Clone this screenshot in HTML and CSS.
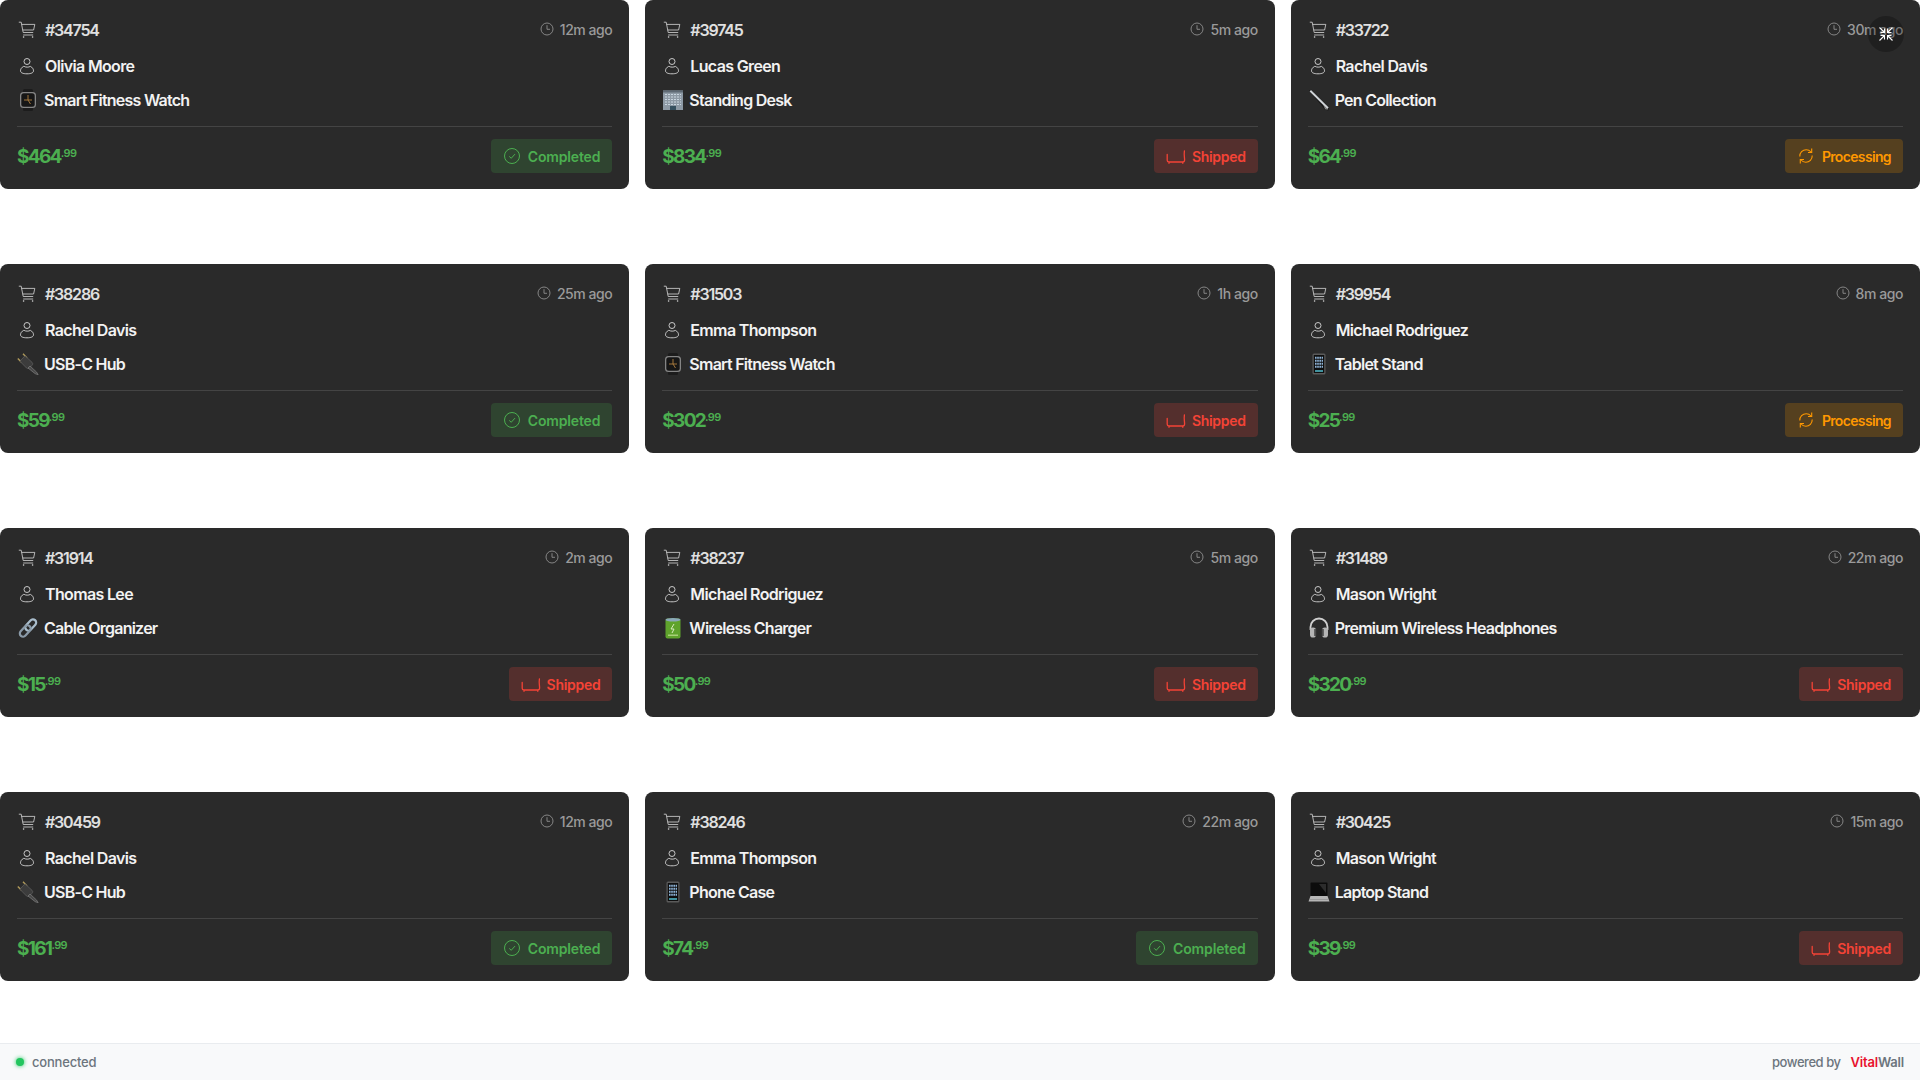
FILE: index.html
```html
<!DOCTYPE html>
<html lang="en">
<head>
<meta charset="utf-8">
<title>Orders</title>
<link rel="stylesheet" href="styles.css">
</head>
<body>
<svg class="defs" width="0" height="0" aria-hidden="true">
  <symbol id="i-cart" viewBox="0 0 18 18"><path d="M.8 1.200h2.400l2 10.300h10M3.600 3.400h13.200l-1.200 5.600H4.700M5.200 14h10" fill="none" stroke="currentColor" stroke-width=".8"/><circle cx="5.600" cy="16" r=".8" fill="currentColor"/><circle cx="14.600" cy="16" r=".8" fill="currentColor"/></symbol>
  <symbol id="i-user" viewBox="0 0 18 18"><circle cx="9" cy="4.500" r="3" fill="none" stroke="currentColor" stroke-width=".9"/><path d="M5.600 9.400C3.600 10.400 2.500 12 2.500 13.800c0 2 2.500 3 6.500 3s6.500-1 6.500-3c0-1.800-1.100-3.400-3.100-4.400-1.800 1-4.600 1-6.300 0z" fill="none" stroke="currentColor" stroke-width=".9"/></symbol>
  <symbol id="i-clock" viewBox="0 0 14 14"><circle cx="7" cy="7" r="6" fill="none" stroke="currentColor" stroke-width=".9"/><path d="M7 3.200V7.300h3" fill="none" stroke="currentColor" stroke-width=".9"/></symbol>
  <symbol id="i-check" viewBox="0 0 18 18"><circle cx="9" cy="9" r="7.500" fill="none" stroke="currentColor" stroke-width="1"/><path d="M6.200 9.300l2 2 3.800-4.200" fill="none" stroke="currentColor" stroke-width="1"/></symbol>
  <symbol id="i-ship" viewBox="0 0 20 18"><path d="M1.200 7.500v5.800c0 1.100.7 1.700 1.700 1.700h13.800c1.200 0 1.900-.7 1.900-1.900 0-3-.8-5-.2-9.100M3 15v1.300M16.800 15v1.300" fill="none" stroke="currentColor" stroke-width="1.300" stroke-linecap="round"/></symbol>
  <symbol id="i-sync" viewBox="0 0 18 18"><path d="M2.800 9.500C2.600 5.600 5.600 2.800 9.200 2.800c2 0 3.600.8 4.800 2.200M15.200 8.500c.2 3.900-2.800 6.700-6.400 6.700-2 0-3.600-.8-4.800-2.200" fill="none" stroke="currentColor" stroke-width="1.100"/><path d="M14.700 1.500V5.500H11M3.300 16.500V12.500H7" fill="none" stroke="currentColor" stroke-width="1.100"/></symbol>
  <symbol id="e-watch" viewBox="0 0 22 22"><rect x="6" y="0" width="10" height="22" rx="1.500" fill="#1c1c1c"/><rect x="3" y="3" width="16" height="16" rx="3.500" fill="#858585"/><rect x="4.300" y="4.300" width="13.400" height="13.400" rx="2.500" fill="#161616"/><path d="M11 6v5l2.500 4M7 11h8" stroke="#b08040" stroke-width=".9" fill="none"/></symbol>
  <symbol id="e-office" viewBox="0 0 22 22"><rect x="1" y="1.500" width="20" height="19.500" fill="#8e9aa5"/><rect x="1" y="1.500" width="20" height="2" fill="#5f6a75"/><path d="M3 5.500h16M3 8h16M3 10.500h16M3 13h16M3 15.500h16" stroke="#c9d6e0" stroke-width="1.200" stroke-dasharray="2 1"/><rect x="8" y="17" width="6" height="4" fill="#36505f"/></symbol>
  <symbol id="e-pen" viewBox="0 0 22 22"><path d="M1 1.500l2.200-.8 18 18-1 2.800-3-.7z" fill="#151515"/><path d="M2.300 1.800L20 19.200" stroke="#d0d4d8" stroke-width="2"/><path d="M15 15.500l5.200 5.200-3-.4z" fill="#8a8a8a"/></symbol>
  <symbol id="e-plug" viewBox="0 0 22 22"><path d="M6 .8l4 4.200M.8 5.500l4 4" stroke="#b09a5a" stroke-width="1.400"/><path d="M8 2.800l7 6.500c1 1 1 2 0 3l-2.500 2.500c-1 1-2 1-3 .2L2.800 8.200z" fill="#3c3c3c" stroke="#6a6a6a" stroke-width=".6"/><path d="M13 13l6.500 6 1.700 2.700-3-1L11 15z" fill="#4a4a4a" stroke="#8a8a8a" stroke-width=".6"/></symbol>
  <symbol id="e-link" viewBox="0 0 22 22"><g fill="none" stroke-width="2.200"><rect x="10.500" y="1.500" width="6.500" height="13" rx="3.250" transform="rotate(42 13.750 8)" stroke="#a9bdcc"/><rect x="5" y="7.500" width="6.500" height="13" rx="3.250" transform="rotate(42 8.250 14)" stroke="#8a9aa8"/></g></symbol>
  <symbol id="e-phone" viewBox="0 0 22 22"><rect x="4.500" y="0.500" width="13" height="21" rx="1.500" fill="#5a5a5a"/><rect x="5.800" y="2" width="10.400" height="18" fill="#0e0e0e"/><path d="M7 4.800h8M7 7.800h8M7 10.800h8M7 13.800h8" stroke="#8fb4d8" stroke-width="2" stroke-dasharray="1.600 .6"/><path d="M7 18h8" stroke="#55c0d0" stroke-width="1.500"/></symbol>
  <symbol id="e-battery" viewBox="0 0 22 22"><rect x="3.500" y="1.500" width="15" height="20" rx="2" fill="#5fa32c"/><ellipse cx="11" cy="2.800" rx="7.500" ry="1.800" fill="#8aa8b8"/><path d="M12 7l-3 5h3l-2 4" stroke="#d8eac0" stroke-width="1" fill="none"/><rect x="6" y="17.500" width="10" height="1.500" fill="#a8d078"/></symbol>
  <symbol id="e-phones" viewBox="0 0 22 22"><path d="M2.500 13V10a8.500 8.500 0 0 1 17 0v3" fill="none" stroke="#cfcfcf" stroke-width="1.800"/><rect x="2" y="10.500" width="6" height="10" rx="2.800" fill="#b4b4b4"/><rect x="14" y="10.500" width="6" height="10" rx="2.800" fill="#b4b4b4"/><rect x="6.200" y="12" width="2" height="7" fill="#4c4c4c"/><rect x="13.800" y="12" width="2" height="7" fill="#4c4c4c"/></symbol>
  <symbol id="e-laptop" viewBox="0 0 22 22"><rect x="2.500" y="1.500" width="17" height="13.500" rx="1" fill="#0c0c0c"/><path d="M11 3l7 0v9z" fill="#2c2c2c"/><path d="M2.500 15h17l2 5.500H.5z" fill="#b5b5b5"/><path d="M2 18.500h18" stroke="#888" stroke-width=".6"/></symbol>
  <symbol id="i-exit" viewBox="0 0 16 16"><path d="M1.500 1.500L6 6M6.500 2.500V6.500H2.500M14.500 1.500L10 6M9.500 2.500V6.500h4M1.500 14.500L6 10M6.500 13.500V9.500H2.500M14.500 14.500L10 10M9.500 13.500V9.500h4" fill="none" stroke="#fff" stroke-width="1.100"/></symbol>
</svg>

<main class="grid">

  <article class="card">
    <div class="row head"><svg class="ic"><use href="#i-cart"/></svg><span class="oid">#34754</span><span class="time"><svg class="clock"><use href="#i-clock"/></svg>12m ago</span></div>
    <div class="row cust"><svg class="ic"><use href="#i-user"/></svg><span>Olivia Moore</span></div>
    <div class="row prod"><svg class="em"><use href="#e-watch"/></svg><span>Smart Fitness Watch</span></div>
    <div class="foot"><span class="price">$464<sup>.99</sup></span><span class="badge ok"><svg class="bi"><use href="#i-check"/></svg>Completed</span></div>
  </article>

  <article class="card">
    <div class="row head"><svg class="ic"><use href="#i-cart"/></svg><span class="oid">#39745</span><span class="time"><svg class="clock"><use href="#i-clock"/></svg>5m ago</span></div>
    <div class="row cust"><svg class="ic"><use href="#i-user"/></svg><span>Lucas Green</span></div>
    <div class="row prod"><svg class="em"><use href="#e-office"/></svg><span>Standing Desk</span></div>
    <div class="foot"><span class="price">$834<sup>.99</sup></span><span class="badge sh"><svg class="bi wide"><use href="#i-ship"/></svg>Shipped</span></div>
  </article>

  <article class="card">
    <div class="row head"><svg class="ic"><use href="#i-cart"/></svg><span class="oid">#33722</span><span class="time"><svg class="clock"><use href="#i-clock"/></svg>30m ago</span></div>
    <div class="row cust"><svg class="ic"><use href="#i-user"/></svg><span>Rachel Davis</span></div>
    <div class="row prod"><svg class="em"><use href="#e-pen"/></svg><span>Pen Collection</span></div>
    <div class="foot"><span class="price">$64<sup>.99</sup></span><span class="badge pr"><svg class="bi"><use href="#i-sync"/></svg>Processing</span></div>
  </article>

  <article class="card">
    <div class="row head"><svg class="ic"><use href="#i-cart"/></svg><span class="oid">#38286</span><span class="time"><svg class="clock"><use href="#i-clock"/></svg>25m ago</span></div>
    <div class="row cust"><svg class="ic"><use href="#i-user"/></svg><span>Rachel Davis</span></div>
    <div class="row prod"><svg class="em"><use href="#e-plug"/></svg><span>USB-C Hub</span></div>
    <div class="foot"><span class="price">$59<sup>.99</sup></span><span class="badge ok"><svg class="bi"><use href="#i-check"/></svg>Completed</span></div>
  </article>

  <article class="card">
    <div class="row head"><svg class="ic"><use href="#i-cart"/></svg><span class="oid">#31503</span><span class="time"><svg class="clock"><use href="#i-clock"/></svg>1h ago</span></div>
    <div class="row cust"><svg class="ic"><use href="#i-user"/></svg><span>Emma Thompson</span></div>
    <div class="row prod"><svg class="em"><use href="#e-watch"/></svg><span>Smart Fitness Watch</span></div>
    <div class="foot"><span class="price">$302<sup>.99</sup></span><span class="badge sh"><svg class="bi wide"><use href="#i-ship"/></svg>Shipped</span></div>
  </article>

  <article class="card">
    <div class="row head"><svg class="ic"><use href="#i-cart"/></svg><span class="oid">#39954</span><span class="time"><svg class="clock"><use href="#i-clock"/></svg>8m ago</span></div>
    <div class="row cust"><svg class="ic"><use href="#i-user"/></svg><span>Michael Rodriguez</span></div>
    <div class="row prod"><svg class="em"><use href="#e-phone"/></svg><span>Tablet Stand</span></div>
    <div class="foot"><span class="price">$25<sup>.99</sup></span><span class="badge pr"><svg class="bi"><use href="#i-sync"/></svg>Processing</span></div>
  </article>

  <article class="card">
    <div class="row head"><svg class="ic"><use href="#i-cart"/></svg><span class="oid">#31914</span><span class="time"><svg class="clock"><use href="#i-clock"/></svg>2m ago</span></div>
    <div class="row cust"><svg class="ic"><use href="#i-user"/></svg><span>Thomas Lee</span></div>
    <div class="row prod"><svg class="em"><use href="#e-link"/></svg><span>Cable Organizer</span></div>
    <div class="foot"><span class="price">$15<sup>.99</sup></span><span class="badge sh"><svg class="bi wide"><use href="#i-ship"/></svg>Shipped</span></div>
  </article>

  <article class="card">
    <div class="row head"><svg class="ic"><use href="#i-cart"/></svg><span class="oid">#38237</span><span class="time"><svg class="clock"><use href="#i-clock"/></svg>5m ago</span></div>
    <div class="row cust"><svg class="ic"><use href="#i-user"/></svg><span>Michael Rodriguez</span></div>
    <div class="row prod"><svg class="em"><use href="#e-battery"/></svg><span>Wireless Charger</span></div>
    <div class="foot"><span class="price">$50<sup>.99</sup></span><span class="badge sh"><svg class="bi wide"><use href="#i-ship"/></svg>Shipped</span></div>
  </article>

  <article class="card">
    <div class="row head"><svg class="ic"><use href="#i-cart"/></svg><span class="oid">#31489</span><span class="time"><svg class="clock"><use href="#i-clock"/></svg>22m ago</span></div>
    <div class="row cust"><svg class="ic"><use href="#i-user"/></svg><span>Mason Wright</span></div>
    <div class="row prod"><svg class="em"><use href="#e-phones"/></svg><span>Premium Wireless Headphones</span></div>
    <div class="foot"><span class="price">$320<sup>.99</sup></span><span class="badge sh"><svg class="bi wide"><use href="#i-ship"/></svg>Shipped</span></div>
  </article>

  <article class="card">
    <div class="row head"><svg class="ic"><use href="#i-cart"/></svg><span class="oid">#30459</span><span class="time"><svg class="clock"><use href="#i-clock"/></svg>12m ago</span></div>
    <div class="row cust"><svg class="ic"><use href="#i-user"/></svg><span>Rachel Davis</span></div>
    <div class="row prod"><svg class="em"><use href="#e-plug"/></svg><span>USB-C Hub</span></div>
    <div class="foot"><span class="price">$161<sup>.99</sup></span><span class="badge ok"><svg class="bi"><use href="#i-check"/></svg>Completed</span></div>
  </article>

  <article class="card">
    <div class="row head"><svg class="ic"><use href="#i-cart"/></svg><span class="oid">#38246</span><span class="time"><svg class="clock"><use href="#i-clock"/></svg>22m ago</span></div>
    <div class="row cust"><svg class="ic"><use href="#i-user"/></svg><span>Emma Thompson</span></div>
    <div class="row prod"><svg class="em"><use href="#e-phone"/></svg><span>Phone Case</span></div>
    <div class="foot"><span class="price">$74<sup>.99</sup></span><span class="badge ok"><svg class="bi"><use href="#i-check"/></svg>Completed</span></div>
  </article>

  <article class="card">
    <div class="row head"><svg class="ic"><use href="#i-cart"/></svg><span class="oid">#30425</span><span class="time"><svg class="clock"><use href="#i-clock"/></svg>15m ago</span></div>
    <div class="row cust"><svg class="ic"><use href="#i-user"/></svg><span>Mason Wright</span></div>
    <div class="row prod"><svg class="em"><use href="#e-laptop"/></svg><span>Laptop Stand</span></div>
    <div class="foot"><span class="price">$39<sup>.99</sup></span><span class="badge sh"><svg class="bi wide"><use href="#i-ship"/></svg>Shipped</span></div>
  </article>

</main>

<button class="fs" type="button" aria-label="Exit fullscreen"><svg class="fs-ic"><use href="#i-exit"/></svg></button>

<footer class="bar">
  <span class="conn"><span class="dot"></span>connected</span>
  <span class="pow">powered by <span class="brand"><span class="vital">Vital</span>Wall</span></span>
</footer>
</body>
</html>
```

FILE: styles.css
```css
* { box-sizing: border-box; }
html, body { height: 100%; }
body {
  margin: 0;
  background: #fff;
  font-family: Inter, "Noto Sans", "Liberation Sans", sans-serif;
  display: flex;
  flex-direction: column;
  height: 1080px;
  overflow: hidden;
}
.defs { position: absolute; }
.grid {
  flex: 1;
  display: grid;
  grid-template-columns: repeat(3, 1fr);
  grid-auto-rows: 248px;
  gap: 16px;
  align-items: start;
}
.card {
  background: #2a2a2a;
  border-radius: 8px;
  padding: 18px 17px 16px;
  display: flex;
  flex-direction: column;
  color: #fff;
}
.row { display: flex; align-items: center; height: 24px; }
.head { margin-bottom: 12px; }
.cust { margin-bottom: 10px; }
.ic { width: 18px; height: 18px; margin-right: 9px; margin-left: 1px; color: #d8d8d8; flex: none; }
.em { width: 22px; height: 22px; margin-right: 5px; flex: none; }
.oid {
  font-size: 16px;
  font-weight: 600;
  letter-spacing: -1.2px;
  color: #e0e0e0;
}
.cust span, .prod span {
  font-size: 16px;
  font-weight: 600;
  letter-spacing: -0.65px;
  color: #f2f2f2;
}
.prod span { letter-spacing: -0.75px; }
.time {
  margin-left: auto;
  padding-bottom: 2px;
  display: flex;
  align-items: center;
  gap: 6px;
  font-size: 14px;
  font-weight: 500;
  letter-spacing: -0.45px;
  color: #9a9a9a;
}
.clock { width: 14px; height: 14px; color: #8f8f8f; }
.foot {
  margin-top: 14px;
  border-top: 1px solid #444;
  padding-top: 12px;
  display: flex;
  align-items: center;
  justify-content: space-between;
}
.price {
  font-size: 19px;
  font-weight: 700;
  letter-spacing: -1.7px;
  color: #4caf50;
  line-height: 30px;
  padding-top: 2px;
}
.price sup { font-size: 11px; font-weight: 600; letter-spacing: -0.6px; vertical-align: 6px; line-height: 0; margin-left: 0; }
.badge {
  height: 34px;
  display: flex;
  align-items: center;
  gap: 7px;
  padding: 0 12px;
  border-radius: 4px;
  font-size: 14px;
  font-weight: 600;
}
.bi { width: 18px; height: 18px; flex: none; }
.bi.wide { width: 20px; }
.ok { background: #2f4430; color: #4caf50; letter-spacing: -0.15px; }
.sh { background: #542f2d; color: #f44336; letter-spacing: -0.3px; gap: 6px; }
.pr { background: #55401f; color: #ff9800; letter-spacing: -0.65px; }
.fs {
  position: absolute;
  top: 16px;
  right: 16px;
  width: 36px;
  height: 36px;
  border: 0;
  padding: 0;
  border-radius: 50%;
  background: rgba(0, 0, 0, .25);
  display: flex;
  align-items: center;
  justify-content: center;
}
.fs-ic { width: 16px; height: 16px; }
.bar {
  height: 37px;
  flex: none;
  background: #f8f9fa;
  border-top: 1px solid #e9ecef;
  display: flex;
  align-items: center;
  justify-content: space-between;
  padding: 0 16px;
  font-size: 13px;
  font-weight: 500;
  letter-spacing: -0.2px;
  color: #6c757d;
}
.conn { display: flex; align-items: center; gap: 8px; }
.dot {
  width: 8px;
  height: 8px;
  border-radius: 50%;
  background: #22c55e;
  box-shadow: 0 0 4px #22c55e;
}
.pow { letter-spacing: -0.45px; }
.brand { margin-left: 7px; font-weight: 600; letter-spacing: -0.2px; }
.vital { color: #e8112d; }
```
